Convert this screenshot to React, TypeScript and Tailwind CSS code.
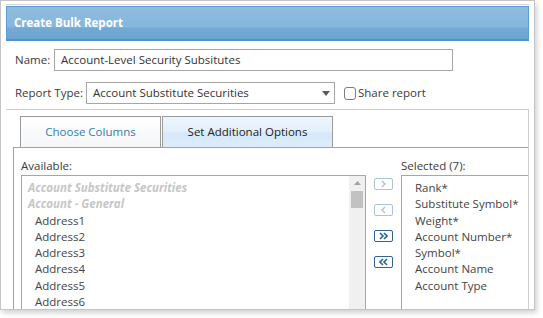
import React from "react"

const font = { fontFamily: '"Open Sans", "Noto Sans", sans-serif' }

function Chevron({ dir, double, dark }: { dir: "l" | "r"; double?: boolean; dark?: boolean }) {
  const color = dark ? "#2d6399" : "#a4bdd6"
  const one = dir === "r" ? "M0 0 L3 3 L0 6" : "M3 0 L0 3 L3 6"
  return (
    <div
      className={
        "w-[19px] h-[12px] rounded-[2px] border flex items-center justify-center bg-white " +
        (dark ? "border-[#2d6399]" : "border-[#a9c3dc]")
      }
    >
      <svg width={double ? 9 : 5} height="8" viewBox={double ? "-1 -1 9 8" : "-1 -1 5 8"}>
        <path d={one} fill="none" stroke={color} strokeWidth={dark ? 1.6 : 1.2} />
        {double && (
          <path
            d={one}
            transform="translate(4 0)"
            fill="none"
            stroke={color}
            strokeWidth={1.6}
          />
        )}
      </svg>
    </div>
  )
}

export default function App() {
  const available = ["Address1", "Address2", "Address3", "Address4", "Address5", "Address6"]
  const selected = [
    "Rank*",
    "Substitute Symbol*",
    "Weight*",
    "Account Number*",
    "Symbol*",
    "Account Name",
    "Account Type",
  ]

  return (
    <div className="w-[543px] h-[318px] bg-white text-[11.5px] text-[#3a3a3a]" style={font}>
      <div className="w-[535px] h-[310px] border border-[#c4c4c4] bg-white shadow-[2px_3px_5px_rgba(0,0,0,0.18)] overflow-hidden">
        <div className="mx-[5px] mt-[3px] border-t border-[#d6d6d6] pt-[1px] h-[310px]">
          <div className="h-[35px] border border-[#5b9dd6] border-b-[2px] border-b-[#4a94d6] bg-[linear-gradient(to_bottom,#8fbde0_0%,#86b6dc_62%,#74a9d4_66%,#6ca4d2_100%)] flex items-center pl-[7px]">
            <span className="text-white font-bold text-[11.5px] leading-none">Create Bulk Report</span>
          </div>

          <div className="pl-[9px] pt-[8px]">
            <div className="flex items-center h-[22px]">
              <span className="w-[39px]">Name:</span>
              <div className="w-[399px] h-[22px] border border-[#a6a6a6] flex items-center pl-[6px] text-[#333]">
                Account-Level Security Subsitutes
              </div>
            </div>
            <div className="flex items-center h-[22px] mt-[11px]">
              <span className="w-[71px]">Report Type:</span>
              <div className="w-[249px] h-[22px] border border-[#a6a6a6] flex items-center justify-between pl-[6px] pr-[4px] text-[#333]">
                <span>Account Substitute Securities</span>
                <svg width="8" height="5" viewBox="0 0 8 5">
                  <path d="M0 0 H8 L4 5 Z" fill="#5a5a5a" />
                </svg>
              </div>
              <div className="ml-[9px] w-[12px] h-[13px] rounded-[3px] border border-[#7c7c7c] bg-white" />
              <span className="ml-[2px]">Share report</span>
            </div>
          </div>

          <div className="mt-[5px] border-t border-r border-[#cfcfcf] h-[240px]">
            <div className="flex pl-[14px] pt-[6px] gap-[1px]">
              <div className="w-[141px] h-[31px] border border-b-0 border-[#9a9a9a] bg-[linear-gradient(to_bottom,#ffffff,#f4f6f8)] flex items-center justify-center text-[#2f7fae]">
                Choose Columns
              </div>
              <div className="w-[171px] h-[31px] border border-b-0 border-[#9a9a9a] bg-[linear-gradient(to_bottom,#ecf5fd_0%,#e3f0fb_50%,#d6e9f9_52%,#dcecfa_100%)] flex items-center justify-center text-[#222]">
                Set Additional Options
              </div>
            </div>
            <div className="ml-[7px] border-t border-l border-[#a3a3a3] h-[200px] flex pl-[7px]">
              <div className="w-[345px] flex flex-col">
                <div className="h-[27px] shrink-0 flex items-end pb-[1px]">Available:</div>
                <div className="flex-1 border border-b-0 border-[#a6a6a6] flex">
                  <div className="flex-1 pt-[4px] leading-[16.3px]">
                    <div className="pl-[6px] font-bold italic text-[#c6c6c6]">Account Substitute Securities</div>
                    <div className="pl-[6px] font-bold italic text-[#c6c6c6]">Account - General</div>
                    {available.map((a) => (
                      <div key={a} className="pl-[13px] text-[#444]">
                        {a}
                      </div>
                    ))}
                  </div>
                  <div className="w-[16px] bg-[#f0f0f0] flex flex-col items-center pt-[5px]">
                    <svg width="7" height="4" viewBox="0 0 7 4">
                      <path d="M0 4 L3.5 0 L7 4 Z" fill="#a3a3a3" />
                    </svg>
                    <div className="mt-[6px] w-[12px] h-[17px] bg-[#c2c2c2]" />
                  </div>
                </div>
              </div>
              <div className="w-[35px] shrink-0 flex flex-col items-center pt-[30px] gap-[14px]">
                <Chevron dir="r" />
                <Chevron dir="l" />
                <Chevron dir="r" double dark />
                <Chevron dir="l" double dark />
              </div>
              <div className="flex-1 flex flex-col">
                <div className="h-[27px] shrink-0 flex items-end pb-[1px]">Selected (7):</div>
                <div className="flex-1 border-t border-l border-[#a6a6a6] pt-[4px] pl-[13px] leading-[16.3px] text-[#444]">
                  {selected.map((s) => (
                    <div key={s}>{s}</div>
                  ))}
                </div>
              </div>
            </div>
          </div>
        </div>
      </div>
    </div>
  )
}
